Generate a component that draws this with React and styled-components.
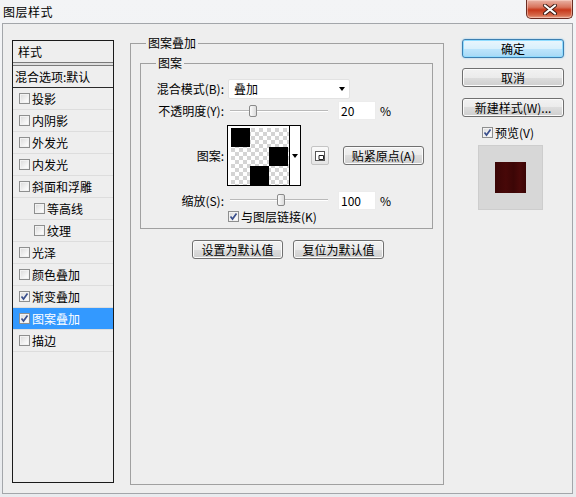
import React from 'react';
import styled, { createGlobalStyle } from 'styled-components';

const GlobalStyle = createGlobalStyle`
  html, body {
    margin: 0;
    padding: 0;
  }
  body {
    font-family: "Noto Sans CJK SC", "Liberation Sans", sans-serif;
    font-size: 12px;
    color: #000;
  }
  * {
    box-sizing: border-box;
  }
`;

const styles = [
  { name: '投影' },
  { name: '内阴影' },
  { name: '外发光' },
  { name: '内发光' },
  { name: '斜面和浮雕' },
  { name: '等高线', sub: true },
  { name: '纹理', sub: true },
  { name: '光泽' },
  { name: '颜色叠加' },
  { name: '渐变叠加', checked: true },
  { name: '图案叠加', checked: true, selected: true },
  { name: '描边' },
];

// black tiles of the 3x3 pattern, [row, col]
const tiles = ['0-0', '1-2', '2-1'];

const App = () => (
  <>
    <GlobalStyle />
    <Window>
      <TitleBar>
        <Title>图层样式</Title>
        <CloseButton>
          <svg width="16" height="11" viewBox="0 0 16 11">
            <path d="M3 1.5 L13 9.5 M13 1.5 L3 9.5" stroke="#3b1a14" strokeWidth="4" strokeLinecap="round" />
            <path d="M3 1.5 L13 9.5 M13 1.5 L3 9.5" stroke="#fff" strokeWidth="2.2" strokeLinecap="round" />
          </svg>
        </CloseButton>
      </TitleBar>
      <Client>
        <StyleList>
          <ListHeader>样式</ListHeader>
          <ListDivider />
          <BlendRow>混合选项:默认</BlendRow>
          {styles.map(s => (
            <StyleItem key={s.name} $sub={s.sub} $selected={s.selected}>
              <CheckBox checked={s.checked} />
              {s.name}
            </StyleItem>
          ))}
        </StyleList>

        <Group>
          <Legend>图案叠加</Legend>
          <InnerGroup>
            <InnerLegend>图案</InnerLegend>
            <Form>
              <Row $h={23}>
                <Label>混合模式(B):</Label>
                <Select>
                  叠加
                  <SelectArrow />
                </Select>
              </Row>
              <Row $h={21}>
                <Label>不透明度(Y):</Label>
                <Slider pos={0.2} />
                <NumberBox>20</NumberBox>
                <Percent>%</Percent>
              </Row>
              <Row $h={69}>
                <Label>图案:</Label>
                <Swatch>
                  <PatternBox>
                    <PatternGrid>
                      {[0, 1, 2].map(r =>
                        [0, 1, 2].map(c => (
                          <Tile key={r + '-' + c} $on={tiles.includes(r + '-' + c)} />
                        ))
                      )}
                    </PatternGrid>
                  </PatternBox>
                  <SwatchArrow>
                    <SelectArrow />
                  </SwatchArrow>
                </Swatch>
                <IconButton>
                  <svg width="10" height="10" viewBox="0 0 10 10">
                    <rect x="0.5" y="0.5" width="9" height="9" fill="#fff" stroke="#555" />
                    <path d="M4 4.5 H8.5 V8.5 H4 Z" fill="none" stroke="#222" />
                  </svg>
                </IconButton>
                <PushButton $w={81} $ml={14}>贴紧原点(A)</PushButton>
              </Row>
              <Row $h={20}>
                <Label>缩放(S):</Label>
                <Slider pos={0.51} />
                <NumberBox>100</NumberBox>
                <Percent>%</Percent>
              </Row>
              <Row $h={13}>
                <Label />
                <CheckBox checked />
                <CheckText>与图层链接(K)</CheckText>
              </Row>
            </Form>
          </InnerGroup>
          <DefaultsRow>
            <PushButton $w={91}>设置为默认值</PushButton>
            <PushButton $w={91}>复位为默认值</PushButton>
          </DefaultsRow>
        </Group>

        <Side>
          <DefaultButton>确定</DefaultButton>
          <PushButton $w={102} $mt={10}>取消</PushButton>
          <PushButton $w={102} $mt={11}>新建样式(W)...</PushButton>
          <PreviewCheck>
            <CheckBox checked />
            <CheckText>预览(V)</CheckText>
          </PreviewCheck>
          <PreviewBox>
            <PreviewSwatch />
          </PreviewBox>
        </Side>
      </Client>
    </Window>
  </>
);

const CheckBox = ({ checked }) => (
  <CheckFrame>
    {checked && (
      <svg width="9" height="9" viewBox="0 0 9 9">
        <path d="M1.5 4.5 L3.5 7 L7.5 1.5" fill="none" stroke="#3a4f8c" strokeWidth="1.7" />
      </svg>
    )}
  </CheckFrame>
);

const Slider = ({ pos }) => (
  <SliderTrack>
    <Thumb style={{ left: `${Math.round(pos * 90) + 1}px` }} />
  </SliderTrack>
);

const Window = styled.div`
  width: 576px;
  height: 497px;
  display: flex;
  flex-direction: column;
  background: linear-gradient(#f3f4f6, #e9ebee);
  overflow: hidden;
`;

const TitleBar = styled.div`
  height: 23px;
  flex-shrink: 0;
  display: flex;
  justify-content: space-between;
  align-items: flex-start;
  padding-left: 3px;
  padding-right: 3px;
`;

const Title = styled.div`
  font-size: 12px;
  line-height: 14px;
  margin-top: 5px;
  letter-spacing: 0.5px;
`;

const CloseButton = styled.div`
  width: 47px;
  height: 19px;
  display: flex;
  align-items: center;
  justify-content: center;
  border: 1px solid #6a2c22;
  border-top: none;
  border-radius: 0 0 5px 5px;
  background: linear-gradient(#e9b3a6, #d8735c 40%, #c7381b 55%, #d66a4b 85%, #e6a58c);
  box-shadow: inset 0 0 0 1px rgba(255, 220, 210, 0.5);
`;

const Client = styled.div`
  flex: 1;
  margin: 0 3px 3px 2px;
  border: 1px solid #a3a6aa;
  background: #eeeeee;
  display: flex;
  align-items: flex-start;
  padding-left: 9px;
`;

const StyleList = styled.div`
  width: 102px;
  height: 443px;
  margin-top: 16px;
  border: 1px solid #1a1a1a;
  display: flex;
  flex-direction: column;
`;

const ListHeader = styled.div`
  height: 21px;
  line-height: 21px;
  padding-left: 5px;
`;

const ListDivider = styled.div`
  height: 4px;
  border-top: 1px solid #7a7a7a;
  border-bottom: 1px solid #7a7a7a;
  background: #dedede;
`;

const BlendRow = styled.div`
  height: 22px;
  line-height: 21px;
  padding-left: 2px;
  border-bottom: 1px solid #2a2a2a;
  white-space: nowrap;
`;

const StyleItem = styled.div`
  height: 22px;
  display: flex;
  align-items: center;
  gap: 2px;
  padding-left: ${p => (p.$sub ? 21 : 6)}px;
  border-bottom: 1px solid #dddddd;
  background: ${p => (p.$selected ? '#3399ff' : 'transparent')};
  color: ${p => (p.$selected ? '#fff' : '#000')};
  white-space: nowrap;
`;

const CheckFrame = styled.span`
  width: 11px;
  height: 11px;
  flex-shrink: 0;
  display: inline-flex;
  align-items: center;
  justify-content: center;
  border: 1px solid #8e8f8f;
  background: linear-gradient(135deg, #d9d9d9, #f7f7f7 70%, #ffffff);
  box-shadow: inset 0 0 0 1px #f2f2f2;
`;

const Group = styled.fieldset`
  width: 314px;
  height: 449px;
  margin: 12px 0 0 16px;
  padding: 0;
  min-width: 0;
  border: 1px solid #a0a0a0;
  display: flex;
  flex-direction: column;
`;

const Legend = styled.legend`
  margin-left: 15px;
  padding: 0 2px;
  line-height: 14px;
  font-size: 12px;
`;

const InnerGroup = styled.fieldset`
  width: 293px;
  height: 173px;
  margin: 6px 0 0 9px;
  padding: 0;
  min-width: 0;
  border: 1px solid #a0a0a0;
`;

const InnerLegend = styled(Legend)``;

const Form = styled.div`
  display: flex;
  flex-direction: column;
  padding: 7px 0 0 14px;
`;

const Row = styled.div`
  height: ${p => p.$h}px;
  display: flex;
  align-items: center;
`;

const Label = styled.div`
  width: 73px;
  flex-shrink: 0;
  padding-right: 4px;
  text-align: right;
  white-space: nowrap;
`;

const Select = styled.div`
  width: 122px;
  height: 20px;
  display: flex;
  align-items: center;
  justify-content: space-between;
  padding: 0 4px 0 5px;
  background: #fff;
  border: 1px solid #e2e2e2;
  border-radius: 2px;
`;

const SelectArrow = styled.span`
  width: 0;
  height: 0;
  border-left: 3.5px solid transparent;
  border-right: 3.5px solid transparent;
  border-top: 4px solid #000;
`;

const SliderTrack = styled.div`
  position: relative;
  width: 98px;
  height: 14px;
  margin-left: 2px;
  &::before {
    content: '';
    position: absolute;
    left: 0;
    right: 0;
    top: 6px;
    height: 1px;
    background: #b9b9b9;
    box-shadow: 0 1px 0 #fff;
  }
`;

const Thumb = styled.span`
  position: absolute;
  top: 1px;
  width: 8px;
  height: 12px;
  border: 1px solid #8a8a8a;
  border-radius: 2px;
  background: linear-gradient(90deg, #fbfbfb, #dcdcdc);
`;

const NumberBox = styled.div`
  width: 38px;
  height: 19px;
  margin-left: 10px;
  padding-left: 2px;
  line-height: 17px;
  background: #fff;
  border: 1px solid #ececec;
`;

const Percent = styled.span`
  margin-left: 4px;
`;

const Swatch = styled.div`
  width: 74px;
  height: 61px;
  margin-left: -1px;
  display: flex;
  border: 1px solid #000;
  background: #fff;
`;

const PatternBox = styled.div`
  width: 62px;
  padding: 2px 0 0 3px;
  border-right: 1px solid #000;
`;

const PatternGrid = styled.div`
  display: grid;
  grid-template-columns: repeat(3, 19px);
  grid-template-rows: repeat(3, 19px);
  background-color: #fff;
  background-image: conic-gradient(#d4d4d4 25%, #fff 0 50%, #d4d4d4 0 75%, #fff 0);
  background-size: 8px 8px;
`;

const Tile = styled.span`
  background: ${p => (p.$on ? '#000' : 'transparent')};
`;

const SwatchArrow = styled.div`
  flex: 1;
  display: flex;
  align-items: center;
  justify-content: center;
`;

const IconButton = styled.div`
  width: 18px;
  height: 19px;
  margin-left: 10px;
  display: flex;
  align-items: center;
  justify-content: center;
  border: 1px solid #c4c4c4;
  border-radius: 2px;
  background: linear-gradient(#fafafa, #e4e4e4);
`;

const PushButton = styled.div`
  width: ${p => p.$w}px;
  height: 19px;
  margin-left: ${p => p.$ml || 0}px;
  margin-top: ${p => p.$mt || 0}px;
  flex-shrink: 0;
  display: flex;
  align-items: center;
  justify-content: center;
  border: 1px solid #707070;
  border-radius: 3px;
  background: linear-gradient(#f2f2f2, #ebebeb 50%, #dddddd 50%, #cfcfcf);
  box-shadow: inset 0 0 0 1px #fbfbfb;
  white-space: nowrap;
`;

const CheckText = styled.span`
  margin-left: 2px;
  white-space: nowrap;
`;

const DefaultsRow = styled.div`
  display: flex;
  gap: 10px;
  margin-top: 11px;
  padding-left: 61px;
`;

const Side = styled.div`
  width: 102px;
  margin: 15px 0 0 18px;
  display: flex;
  flex-direction: column;
`;

const DefaultButton = styled(PushButton)`
  width: 102px;
  border-color: #3c7fb1;
  background: linear-gradient(#eaf6fd, #d9f0fc 50%, #bee6fd 50%, #a7d9f5);
  box-shadow: inset 0 0 0 1px #8fdcff, 0 0 2px #7fc6ee;
`;

const PreviewCheck = styled.div`
  height: 14px;
  margin-top: 8px;
  padding-left: 20px;
  display: flex;
  align-items: center;
`;

const PreviewBox = styled.div`
  width: 65px;
  height: 65px;
  margin: 6px 0 0 16px;
  display: flex;
  align-items: center;
  justify-content: center;
  background: #d7d7d7;
  border: 1px solid #cdcdcd;
`;

const PreviewSwatch = styled.div`
  width: 31px;
  height: 31px;
  background: linear-gradient(90deg, #3a0505, #470808 35%, #3c0606 60%, #4a0909 80%, #3a0505);
`;

export default App;
